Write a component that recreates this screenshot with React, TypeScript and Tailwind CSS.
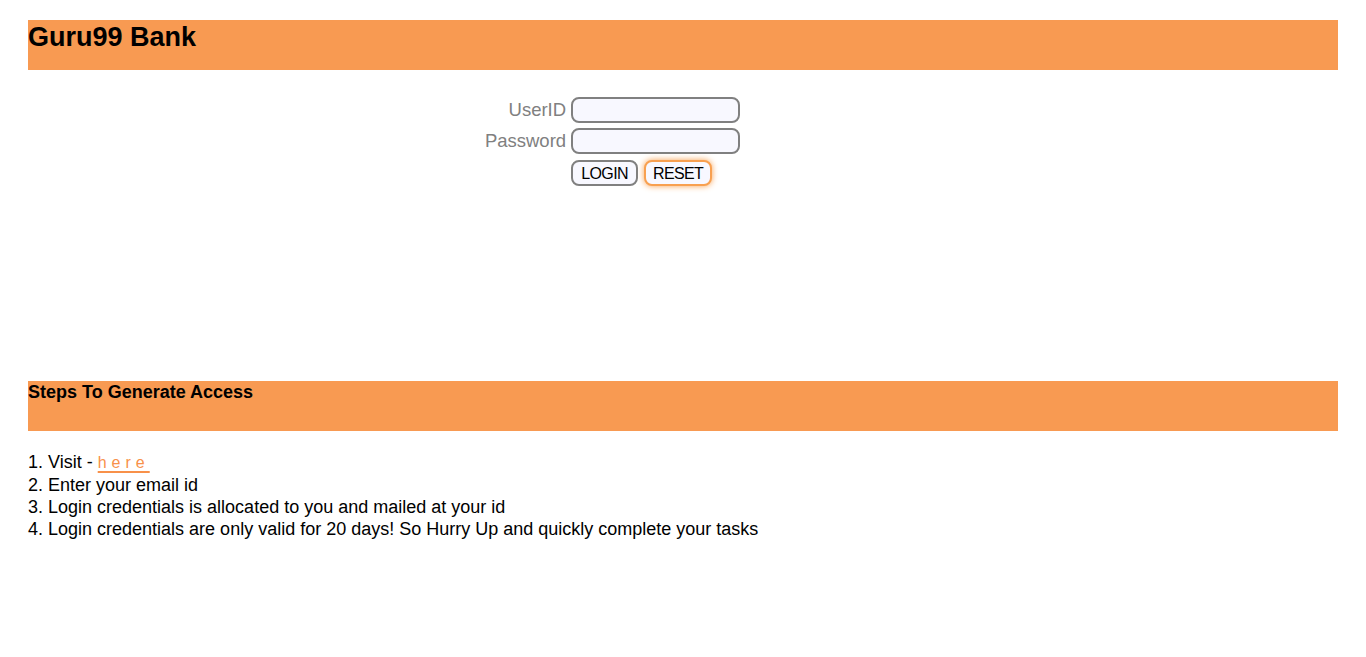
import React from "react";

export default function App() {
  return (
    <div className="min-h-[657px] bg-white px-[28px] pt-[20px] text-black" style={{ fontFamily: '"Liberation Sans", Arial, sans-serif' }}>
      <div className="h-[50px] bg-[#f89a52]">
        <h2 className="pt-[1px] text-[27px] font-bold leading-[32px]">Guru99 Bank</h2>
      </div>

      <div className="mt-[27px] flex justify-center pr-[141px]">
        <div className="grid grid-cols-[auto_auto] items-center gap-x-[5px] gap-y-[5px]">
          <label className="text-right text-[18.5px] leading-[22px] text-[#808080]">UserID</label>
          <input className="h-[26px] w-[169px] rounded-[8px] border-2 border-[#808080] bg-[#f8f8ff] outline-none" />
          <label className="text-right text-[18.5px] leading-[22px] text-[#808080]">Password</label>
          <input type="password" className="h-[26px] w-[169px] rounded-[8px] border-2 border-[#808080] bg-[#f8f8ff] outline-none" />
          <div />
          <div className="flex gap-[6px] pt-[1px]">
            <button className="h-[26px] w-[67px] rounded-[8px] border-2 border-[#808080] bg-[#f8f8ff] pt-[1px] text-[16px] leading-none tracking-[-0.6px]">LOGIN</button>
            <button className="h-[26px] w-[68px] rounded-[8px] border-2 border-[#f8a050] bg-[#f8f8ff] pt-[1px] text-[16px] leading-none tracking-[-0.6px] shadow-[0_0_6px_#f8a050]">RESET</button>
          </div>
        </div>
      </div>

      <div className="mt-[195px] h-[50px] bg-[#f89a52]">
        <h4 className="pt-[1px] text-[18px] font-bold leading-[20px]">Steps To Generate Access</h4>
      </div>

      <div className="mt-[20px] text-[18px] leading-[22px]">
        <div>
          1. Visit -{" "}
          <a className="text-[16px] tracking-[5px] text-[#f8914a] underline decoration-[1.5px] underline-offset-[3px]" href="#">here</a>
        </div>
        <div>2. Enter your email id</div>
        <div>3. Login credentials is allocated to you and mailed at your id</div>
        <div>4. Login credentials are only valid for 20 days! So Hurry Up and quickly complete your tasks</div>
      </div>
    </div>
  );
}
